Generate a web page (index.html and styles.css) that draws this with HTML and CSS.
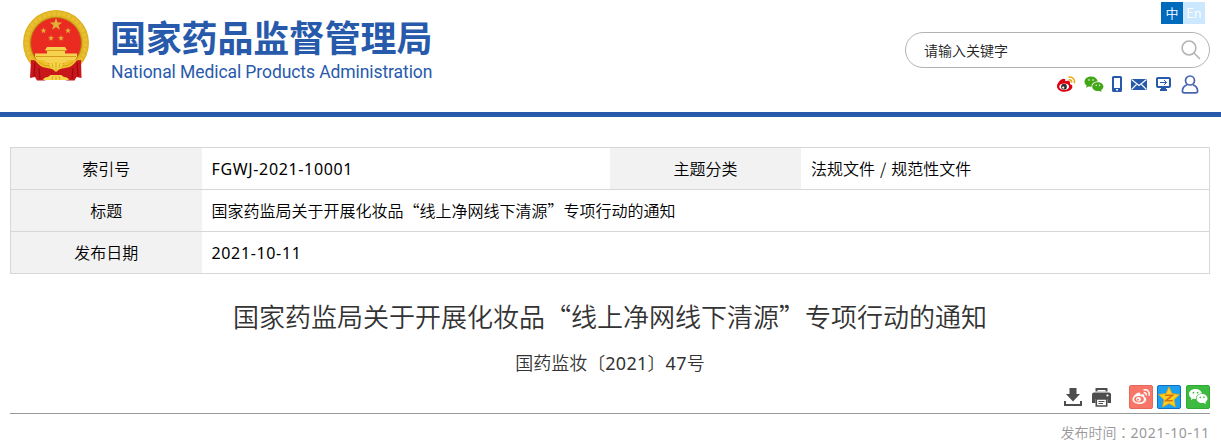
FILE: index.html
```html
<!DOCTYPE html>
<html lang="zh-CN">
<head>
    <meta charset="UTF-8">
    <meta name="viewport" content="width=device-width, initial-scale=1.0">
    <title>国家药监局关于开展化妆品“线上净网线下清源”专项行动的通知</title>
    <link rel="stylesheet" href="styles.css">
</head>
<body>
    <!-- 页头 -->
    <header class="header">
        <div class="logo">
            <svg class="emblem" width="68" height="72" viewBox="0 0 68 72">
                <circle cx="33" cy="33" r="33" fill="#e0b222"/>
                <circle cx="33" cy="33" r="29.500" fill="none" stroke="#e8bf30" stroke-width="4" stroke-dasharray="4 1"/>
                <circle cx="33" cy="33" r="25.500" fill="#e92b22" stroke="#b98412" stroke-width="1"/>
                <g fill="#e2b13a">
                    <path d="M33 8l1.600 4.400h4.600l-3.700 2.800 1.400 4.500-3.900-2.700-3.900 2.700 1.400-4.500-3.700-2.800h4.600z"/>
                    <path id="star" d="M20.500 17.500l.8 2.200h2.300l-1.900 1.400.7 2.200-1.900-1.300-1.900 1.300.7-2.200-1.900-1.400h2.300z"/>
                    <use href="#star" x="24.500"/>
                    <use href="#star" x="7.500" y="7.500"/>
                    <use href="#star" x="17.500" y="7.500"/>
                </g>
                <path d="M24 37h18l2 3-2 1v2.500h12v3q-2 5-6 7H18q-4-2-6-7v-3h12V41l-2-1z" fill="#f5d350"/>
                <path d="M13 46.500h40M23 40.500h20" stroke="#d89a1b" fill="none"/>
                <path d="M8 50l5 .5q6 5 12 5l8 3 8-3q6 0 12-5l5-.5.500 18-5-1-2 3.500h-8l-5-5H27l-5 5h-8l-2-3.500-5 1z" fill="#c8161b"/>
                <path d="M12 53l-1 13M16 58l1 11M54 53l1 13M50 58l-1 11" fill="none" stroke="#95090e"/>
                <path d="M12 50q9-1 14 4l4-3h6l4 3q5-5 14-4-4 7-12 8l-5 1-4 3-4-3-5-1q-8-1-12-8z" fill="#eec02a"/>
                <path d="M26 54l3-3h8l3 3-3 5h-8zM20 70q1-3 5-3l3-2h10l3 2q4 0 5 3z" fill="#f6d548"/>
                <path d="M29 70l1-4M37 70l-1-4M30 58l-1-5M36 58l1-5M33 59v-7M33 66v4M16 52q6 5 11 4M50 52q-6 5-11 4" stroke="#cf951a" fill="none" stroke-width=".7"/>
            </svg>
            <div class="logo-text">
                <div class="logo-cn">国家药品监督管理局</div>
                <div class="logo-en">National Medical Products Administration</div>
            </div>
        </div>
        <div class="tools">
            <div class="lang">
                <a class="lang-cn">中</a>
                <a class="lang-en">En</a>
            </div>
            <div class="search">
                <span>请输入关键字</span>
                <svg width="20" height="20" viewBox="0 0 20 20" fill="none" stroke="#b3b3b3" stroke-width="1.500">
                    <circle cx="8" cy="8" r="6.900"/>
                    <path d="M13 13l6 6"/>
                </svg>
            </div>
            <div class="links">
                <svg class="weibo" width="20" height="16" viewBox="0 0 20 16">
                    <path d="M1 10.500C1 7 5 2.800 7.700 2.800c1.600 0 1.900 1.200 1.500 2.400 2.100-.9 5-.9 4.900 1.700l-.2 1c1.700.4 2.500 1.400 2.500 2.700 0 3-3.700 5.200-7.700 5.200S1 13.500 1 10.500z" fill="#dc0010"/>
                    <ellipse cx="8.200" cy="10.700" rx="4.900" ry="3.300" fill="#fff"/>
                    <circle cx="8" cy="10.700" r="2.900" fill="#3a3030"/>
                    <circle cx="7.200" cy="11.600" r="1.100" fill="#fff"/>
                    <path d="M12.500 1.300c4-1 6.800 2 5.800 5.900M12.700 3.900c2-.3 3.200.8 2.900 2.700" fill="none" stroke="#e9a912" stroke-width="1.500"/>
                </svg>
                <svg class="wechat" width="20" height="16" viewBox="0 0 20 16">
                    <path d="M7.200.5C3.200.5.500 2.800.500 5.700c0 1.700.8 2.900 2.200 3.900l-.6 2.200 2.600-1.200 2.900.2c-.3-3.200 2.200-5.200 6.200-5.300C13.200 2.500 10.700.5 7.200.5z" fill="#43a616"/>
                    <path d="M13.800 6.200c-3.200 0-5.600 1.900-5.600 4.400s2.300 4.500 5.600 4.500l1.700-.2 2 1-.4-1.700c1.500-.9 2.300-2.100 2.300-3.600 0-2.500-2.300-4.400-5.600-4.400z" fill="#43a616"/>
                    <g fill="#fff"><circle cx="5" cy="4" r=".8"/><circle cx="9" cy="4" r=".8"/><circle cx="12.200" cy="9.300" r=".7"/><circle cx="15.600" cy="9.300" r=".7"/></g>
                </svg>
                <svg class="phone" width="10" height="16" viewBox="0 0 10 16">
                    <path fill-rule="evenodd" d="M1.500 0h7A1.500 1.500 0 0 1 10 1.500v13A1.500 1.500 0 0 1 8.500 16h-7A1.500 1.500 0 0 1 0 14.500v-13A1.500 1.500 0 0 1 1.500 0zM2 2v10h6V2zM4 13v1.500h2V13z" fill="#285aab"/>
                </svg>
                <svg class="mail" width="16" height="11" viewBox="0 0 16 11">
                    <path d="M0 0h16v11H0z" fill="#285aab"/>
                    <path d="M.5.500L8 6.500 15.500.500M.5 10.500l5-5M15.500 10.500l-5-5" fill="none" stroke="#fff" stroke-width="1.100"/>
                </svg>
                <svg class="screen" width="15" height="14" viewBox="0 0 15 14">
                    <rect x="1" y="1" width="13" height="9" rx="1" fill="none" stroke="#285aab" stroke-width="2"/>
                    <path d="M5 10h5v2h1v2H4v-2h1z" fill="#285aab"/>
                    <path d="M4 5.500h6.500M8 3l2.500 2.500L8 8" fill="none" stroke="#285aab"/>
                </svg>
                <svg class="user" width="18" height="19" viewBox="0 0 18 19" fill="none" stroke="#4765b0" stroke-width="1.700">
                    <circle cx="9" cy="5.500" r="4.500"/>
                    <path d="M6 9.800C3 11 1.400 13.500 1.400 16c0 1.300.7 1.900 2 1.900h11.200c1.300 0 2-.6 2-1.900 0-2.500-1.600-5-4.600-6.200"/>
                </svg>
            </div>
        </div>
    </header>

    <!-- 索引信息 -->
    <table class="info">
        <tr>
            <th>索引号</th>
            <td class="num">FGWJ-2021-10001</td>
            <th>主题分类</th>
            <td>法规文件<span class="slash">/</span>规范性文件</td>
        </tr>
        <tr>
            <th>标题</th>
            <td colspan="3">国家药监局关于开展化妆品“线上净网线下清源”专项行动的通知</td>
        </tr>
        <tr>
            <th>发布日期</th>
            <td colspan="3" class="num">2021-10-11</td>
        </tr>
    </table>

    <!-- 正文标题 -->
    <div class="article">
        <h1>国家药监局关于开展化妆品“线上净网线下清源”专项行动的通知</h1>
        <p class="doc-no">国药监妆〔<span class="num">2021</span>〕<span class="num">47</span>号</p>
        <div class="share">
            <svg class="download" width="18" height="18" viewBox="0 0 18 18" fill="#4d4d4d">
                <path d="M5.500 0h7v6H16l-7 7.500L2 6h3.500z"/>
                <path d="M0 13h2v3h14v-3h2v5H0z"/>
            </svg>
            <svg class="print" width="19" height="19" viewBox="0 0 19 19">
                <path d="M3.500 0h12v3.500h-12z" fill="#4d4d4d"/>
                <path d="M5.500 2h8v1.500h-8z" fill="#fff"/>
                <path d="M2 4.500h15q2 0 2 2V15h-3.500v-4h-12v4H0V6.500q0-2 2-2z" fill="#4d4d4d"/>
                <path d="M4.300 11h10.400v7H4.300z" fill="#fff" stroke="#4d4d4d" stroke-width="1.600"/>
                <path d="M6.500 13.500h6M6.500 15.500h4.500" stroke="#4d4d4d"/>
                <circle cx="15.500" cy="7.500" r="1.100" fill="#fff"/>
            </svg>
            <svg class="share-weibo" width="24" height="24" viewBox="0 0 24 24">
                <rect x=".5" y=".5" width="23" height="23" rx="1.500" fill="#f87668" stroke="#e4695c"/>
                <path d="M3.500 14.500c0-3 4-7 6.500-7 1.500 0 1.600 1 1.200 2.200 2-.8 4.400-.8 4.300 1.400l-.3 1c1.400.3 2 1.200 2 2.300 0 2.600-3.200 4.500-6.900 4.500s-6.800-1.600-6.800-4.400z" fill="#fff"/>
                <ellipse cx="10" cy="14.300" rx="4.800" ry="3.200" fill="#f87668"/>
                <circle cx="9.500" cy="14.300" r="2.400" fill="#fff"/>
                <circle cx="9" cy="14.700" r="1" fill="#f87668"/>
                <path d="M14.500 5c4-1 6.500 1.800 5.500 5.700M14.700 7.800c1.900-.3 3 .7 2.600 2.500" fill="none" stroke="#fff" stroke-width="1.400"/>
            </svg>
            <svg class="share-qzone" width="24" height="24" viewBox="0 0 24 24">
                <rect x=".5" y=".5" width="23" height="23" rx="1.500" fill="#1b9ff1" stroke="#0e6fc4"/>
                <path d="M12 1.800l3 6.800 7.500.9-5.400 5.100 1.300 7.400-6.400-3.600L5.600 22l1.300-7.400L1.500 9.500 9 8.600z" fill="#ffce22" stroke="#e2a10f" stroke-width=".7"/>
                <path d="M8 10.200h7.500l-6.800 5.600h7" fill="none" stroke="#d9700d" stroke-width="1.500"/>
            </svg>
            <svg class="share-wechat" width="24" height="24" viewBox="0 0 24 24">
                <rect x=".5" y=".5" width="23" height="23" rx="1.500" fill="#3dbb41" stroke="#31aa35"/>
                <path d="M9.500 4C5.800 4 3 6.200 3 9c0 1.700 1 3 2.400 4l-.6 2.100 2.500-1.300 2.700.3c-.5-3.400 2.300-5.700 6-5.700C15.300 5.700 12.800 4 9.500 4z" fill="#fff"/>
                <path d="M16 9.100c-3.100 0-5.400 2-5.400 4.500s2.300 4.500 5.400 4.500l1.700-.2 2.200 1.200-.5-1.900c1.300-.9 2.100-2.100 2.100-3.600 0-2.500-2.400-4.500-5.500-4.500z" fill="#fff"/>
                <g fill="#3dbb41"><circle cx="7.400" cy="7.700" r=".9"/><circle cx="11.600" cy="7.700" r=".9"/><circle cx="14.300" cy="12.400" r=".8"/><circle cx="17.900" cy="12.400" r=".8"/></g>
            </svg>
        </div>
        <p class="pub-time">发布时间<span class="colon" lang="zh-TW">：</span><span class="num">2021-10-11</span></p>
    </div>
</body>
</html>
```
FILE: styles.css
```css
body {
    margin: 0;
    background-color: #fff;
    color: #000;
    font-family: "Noto Sans CJK SC", "Noto Sans", sans-serif;
    font-size: 16px;
    font-weight: 350;
}
.num {
    font-family: "Noto Sans", "Noto Sans CJK SC", sans-serif;
    font-weight: 400;
    letter-spacing: 0.65px;
}

/* header */
.header {
    display: flex;
    justify-content: space-between;
    height: 112px;
    padding: 0 11px 0 23px;
    border-bottom: 5px solid #285aab;
}
.logo {
    display: flex;
    padding-top: 10px;
}
.emblem {
    margin-right: 19px;
}
.logo-text {
    color: #285aab;
    white-space: nowrap;
}
.logo-cn {
    font-size: 36px;
    font-weight: bold;
    line-height: 52px;
    letter-spacing: -0.2px;
}
.logo-en {
    font-family: Roboto, "Liberation Sans", sans-serif;
    font-size: 17.5px;
    font-weight: 400;
    line-height: 20px;
    letter-spacing: -0.08px;
    margin-left: 1px;
}
.tools {
    display: flex;
    flex-direction: column;
    align-items: flex-end;
    width: 305px;
    padding-top: 2px;
}
.lang {
    display: flex;
    margin-right: 5px;
    font-size: 13px;
    line-height: 21px;
    text-align: center;
    color: #fff;
}
.lang a {
    width: 22px;
    height: 22px;
}
.lang-cn {
    background-color: #006bbd;
}
.lang-en {
    background-color: #cbe8ff;
}
.search {
    box-sizing: border-box;
    display: flex;
    align-items: center;
    justify-content: space-between;
    width: 305px;
    height: 36px;
    margin-top: 8px;
    padding: 0 8px 0 18px;
    border: 1px solid #b3b3b3;
    border-radius: 18px;
    font-size: 14px;
    color: #222;
}
.links {
    display: flex;
    align-items: center;
    height: 20px;
    margin-top: 6px;
    padding-right: 11px;
}
.wechat {
    margin-left: 8px;
}
.phone {
    margin-left: 8px;
}
.mail {
    margin-left: 9px;
}
.screen {
    margin-left: 9px;
}
.user {
    margin-left: 10px;
}

/* info table */
.info {
    width: 1200px;
    margin: 30px 0 0 10px;
    border-collapse: collapse;
    table-layout: fixed;
    border: 1px solid #d7d7d7;
}
.info tr {
    height: 42px;
    border-bottom: 1px solid #d7d7d7;
}
.info th {
    width: 191px;
    padding: 0 0 2px;
    box-sizing: border-box;
    background-color: #f2f2f2;
    font-weight: 350;
    text-align: center;
}
.info td {
    padding: 0 0 2px 10px;
    line-height: 24px;
}
.info td.num {
    padding-bottom: 0;
}
.slash {
    margin: 0 5px;
}

/* article */
.article {
    width: 1200px;
    margin-left: 10px;
    text-align: center;
    color: #333;
}
.article h1 {
    margin: 22px 0 0;
    font-size: 26px;
    font-weight: 350;
    line-height: 40px;
}
.doc-no {
    margin: 12px 0 0;
    font-size: 18px;
    line-height: 28px;
}
.doc-no .num {
    letter-spacing: 0.3px;
}
.share {
    display: flex;
    align-items: center;
    justify-content: flex-end;
    height: 24px;
    margin-top: 8px;
    padding-bottom: 4px;
    border-bottom: 1px solid #999;
}
.print {
    margin-left: 10px;
}
.share-weibo {
    margin-left: 18px;
}
.share-qzone {
    margin-left: 4px;
}
.share-wechat {
    margin-left: 5px;
}
.pub-time {
    margin: 8px 0 0;
    font-size: 14px;
    line-height: 20px;
    text-align: right;
    color: #999;
}
.colon {
    font-family: "Noto Sans CJK TC", sans-serif;
}
```
